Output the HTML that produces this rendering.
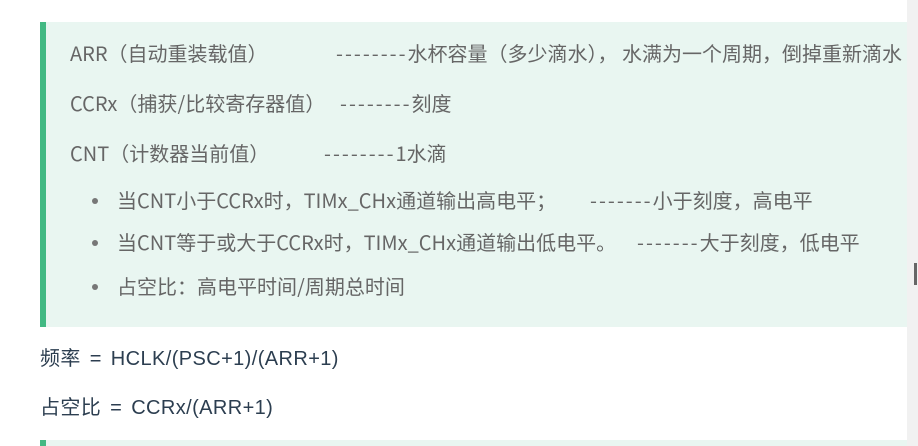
<!DOCTYPE html>
<html><head><meta charset="utf-8"><style>
html,body{margin:0;padding:0;width:918px;height:446px;overflow:hidden;background:#fff;position:relative;
font-family:"Noto Sans CJK SC","Liberation Sans",sans-serif;font-size:20px;}
.q{position:absolute;left:40px;top:22px;width:867px;height:305px;background:#e9f6f1;border-left:6px solid #42b983;box-sizing:border-box;}
.q2{position:absolute;left:40px;top:440px;width:867px;height:10px;background:#e9f6f1;border-left:6px solid #42b983;box-sizing:border-box;}
.t{position:absolute;white-space:nowrap;color:#666;line-height:22px;overflow:hidden;}
.d{color:#2c3e50;font-family:"Liberation Sans","Noto Sans CJK SC",sans-serif;word-spacing:3px;letter-spacing:0.4px;}
.ds{letter-spacing:2px;}
.dot{position:absolute;width:6px;height:6px;border-radius:50%;background:#777;}
.sb{position:absolute;left:907px;top:0;width:11px;height:446px;background:#f1f1f1;}
</style></head><body>
<div class="q"></div>
<div class="q2"></div>
<div class="t" style="left:70px;top:42px">ARR（自动重装载值）</div>
<div class="t" style="left:336px;top:42px;width:571px"><span class="ds">--------</span>水杯容量（多少滴水）， 水满为一个周期，倒掉重新滴水</div>
<div class="t" style="left:70px;top:92px">CCRx（捕获/比较寄存器值）</div>
<div class="t" style="left:340px;top:92px"><span class="ds">--------</span>刻度</div>
<div class="t" style="left:70px;top:142px">CNT（计数器当前值）</div>
<div class="t" style="left:324px;top:142px"><span class="ds">--------</span>1水滴</div>
<div class="dot" style="left:92px;top:198px"></div>
<div class="t" style="left:117px;top:189px">当CNT小于CCRx时，TIMx_CHx通道输出高电平；</div>
<div class="t" style="left:590px;top:189px"><span class="ds">-------</span>小于刻度，高电平</div>
<div class="dot" style="left:92px;top:240px"></div>
<div class="t" style="left:117px;top:231px">当CNT等于或大于CCRx时，TIMx_CHx通道输出低电平。</div>
<div class="t" style="left:637px;top:231px"><span class="ds">-------</span>大于刻度，低电平</div>
<div class="dot" style="left:92px;top:284px"></div>
<div class="t" style="left:117px;top:275px">占空比：高电平时间/周期总时间</div>
<div class="t d" style="left:40px;top:348px">频率 = HCLK/(PSC+1)/(ARR+1)</div>
<div class="t d" style="left:40px;top:397px">占空比 = CCRx/(ARR+1)</div>
<div class="sb"></div>
<div style="position:absolute;left:914px;top:263px;width:3px;height:22px;background:#666"></div>
</body></html>
